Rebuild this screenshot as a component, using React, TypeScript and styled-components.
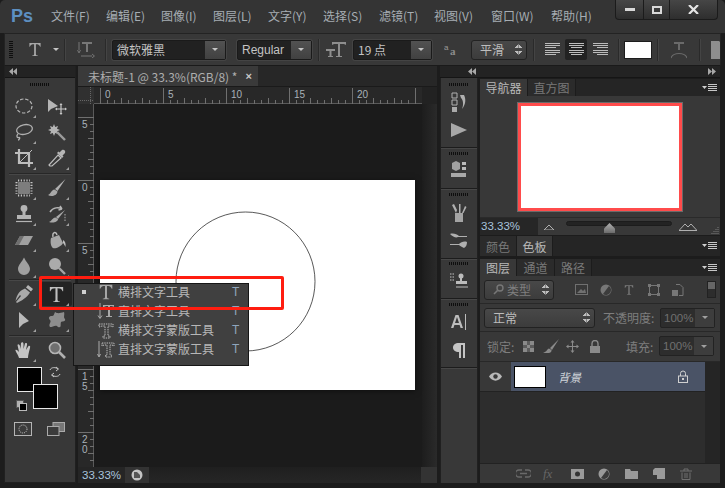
import React, { FC, ReactNode } from "react";
import styled, { createGlobalStyle } from "styled-components";

const CJK = `"Noto Sans CJK SC", "Liberation Sans", sans-serif`;

const GlobalStyle = createGlobalStyle`
  html, body { margin: 0; padding: 0; background: #1c1c1c; }
  * { box-sizing: border-box; }
`;

const Glyph: FC<{ w?: number; h?: number; children: ReactNode }> = ({ w = 20, h = 20, children }) => (
  <svg width={w} height={h} viewBox={`0 0 ${w} ${h}`} fill="none" style={{ display: "block" }}>
    {children}
  </svg>
);

/* ---------- tool icons ---------- */
const IconMarquee = () => (
  <Glyph><ellipse cx="10" cy="10" rx="8" ry="7" stroke="#b5b5b5" strokeWidth="1.2" strokeDasharray="3.4 1.8" /></Glyph>
);
const IconMove = () => (
  <Glyph w={22}>
    <path d="M2 3 L2 16 L5 13 L12 10 Z" fill="#b5b5b5" />
    <path d="M15 8 V18 M10 13 H20" stroke="#c8c8c8" strokeWidth="1.2" />
    <path d="M15 7 L13.5 9 H16.5 Z M15 19 L13.5 17 H16.5 Z M9 13 L11 11.5 V14.5 Z M21 13 L19 11.5 V14.5 Z" fill="#c8c8c8" />
  </Glyph>
);
const IconLasso = () => (
  <Glyph>
    <ellipse cx="10.5" cy="7.5" rx="8" ry="4.8" transform="rotate(-12 10.5 7.5)" stroke="#b0b0b0" strokeWidth="1.3" />
    <path d="M4 12 C2 14 3 16 5 15.5 C6.5 15 5.5 18 4 18" stroke="#b0b0b0" strokeWidth="1.3" />
  </Glyph>
);
const IconWand = () => (
  <Glyph>
    <path d="M7 2 L8.2 5 L11 4 L10 6.8 L13 8 L10 9.2 L11 12 L8.2 11 L7 14 L5.8 11 L3 12 L4 9.2 L1 8 L4 6.8 L3 4 L5.8 5 Z" fill="#b5b5b5" />
    <path d="M10 10 L18 18" stroke="#9c9c9c" strokeWidth="2.4" />
  </Glyph>
);
const IconCrop = () => (
  <Glyph>
    <path d="M5 1 V15 H19 M1 5 H15 V19" stroke="#bdbdbd" strokeWidth="2.2" />
    <path d="M5 15 L18 2" stroke="#bdbdbd" strokeWidth="1" />
  </Glyph>
);
const IconDropper = () => (
  <Glyph>
    <path d="M3 18 L2 17 L11 7 L14 10 L5 18 Z" stroke="#bdbdbd" strokeWidth="1.2" />
    <path d="M10 5 L15 10 L16.5 8.5 L15.5 7.5 L18 5 C19 3 17 1 15 2 L12.5 4.5 L11.5 3.5 Z" fill="#b5b5b5" />
  </Glyph>
);
const IconPatch = () => (
  <Glyph>
    <rect x="4" y="4" width="12" height="12" rx="1" fill="#7d7d7d" />
    <path d="M2.5 4 V16 M17.5 4 V16 M4 2.5 H16 M4 17.5 H16" stroke="#c4c4c4" strokeWidth="2" strokeDasharray="1.2 1.6" />
  </Glyph>
);
const IconBrush = () => (
  <Glyph>
    <path d="M18.5 1 L8 11 L10.5 13 Z" fill="#b0b0b0" />
    <path d="M7.5 11.5 C4 12 4 16 1 17 C4 19 10 18 10.5 13.5 Z" fill="#a8a8a8" />
  </Glyph>
);
const IconStamp = () => (
  <Glyph>
    <circle cx="10" cy="4.5" r="3.4" fill="#b4b4b4" />
    <path d="M8.5 7 H11.5 V11 H17 V15 H3 V11 H8.5 Z" fill="#b4b4b4" />
    <path d="M2 17.5 H18" stroke="#b4b4b4" strokeWidth="1.2" />
  </Glyph>
);
const IconHistoryBrush = () => (
  <Glyph>
    <path d="M18 6 L9 13 L11 15 Z" fill="#aaa" />
    <path d="M8.5 13.5 C5 14 5 17 2 18 C6 19.5 11 18 11 15 Z" fill="#a8a8a8" />
    <path d="M3 8 C6 3 12 3 15 5 M15 5 L13 2 M15 5 L11.5 6" stroke="#b5b5b5" strokeWidth="1.5" />
    <path d="M18 10 V18" stroke="#999" strokeWidth="1.2" strokeDasharray="1.4 1.4" />
  </Glyph>
);
const IconEraser = () => (
  <Glyph>
    <path d="M6 6 H19 L14 15 H1 Z" fill="#a0a0a0" />
    <path d="M1 15 L6 6 H10 L5 15 Z" fill="#6f6f6f" />
  </Glyph>
);
const IconBucket = () => (
  <Glyph>
    <path d="M4 8 L12 5 L16 13 C14 17 8 19 6 18 C4 17 3 12 4 8 Z" fill="#a8a8a8" />
    <path d="M6 7 C5 2 9 1 10 5" stroke="#bbb" strokeWidth="1.4" />
    <path d="M16 10 C18 11 19 13 18.5 17 C17.5 15 17 14 16 13 Z" fill="#bdbdbd" />
  </Glyph>
);
const IconDrop = () => (
  <Glyph><path d="M10 1.5 C12 6 16 9 16 13 A6 6 0 0 1 4 13 C4 9 8 6 10 1.5 Z" fill="#a0a0a0" /></Glyph>
);
const IconDodge = () => (
  <Glyph>
    <circle cx="8" cy="8" r="6" fill="#ababab" />
    <path d="M12 12 L18 18" stroke="#a4a4a4" strokeWidth="2.4" />
  </Glyph>
);
const IconPen = () => (
  <Glyph>
    <path d="M14 1 L19 5 L17 7.5 L12 3.5 Z" fill="#b5b5b5" />
    <path d="M11 4.5 L16 8.5 C14 12 11 15 3 19 L2 18 L7 12 L6 11 L1.5 17 C3 9 7 6 11 4.5 Z" fill="#a9a9a9" />
  </Glyph>
);
const IconPathSelect = () => (
  <Glyph><path d="M5 2 V18 L9 14 L15 11 Z" fill="#b9b9b9" /></Glyph>
);
const IconBlob = () => (
  <Glyph>
    <path d="M8 2 C11 4 13 3 17 2 C18 5 16 7 18 9 C19 12 15 11 14 12 C13 15 15 18 11 17 C9 14 6 17 3 17 C1 14 5 12 3 10 C1 8 2 6 5 6 C7 6 7 4 8 2 Z" fill="#8d8d8d" />
  </Glyph>
);
const IconHand = () => (
  <Glyph>
    <path d="M5 18 C4 14 1 11 1.5 10 C2.5 9 4 11 5 12 L3.5 5 C4 3.5 5.5 4.5 6 6 L6.5 9 L7 3 C8 1.5 9.5 2 9.5 4 V9 L11 3.5 C12 2.5 13.5 3 13 5 L12 10 L14.5 6 C16 5.5 16.5 6.5 16 8 C15 12 14 15 14 18 Z" fill="#c4c4c4" />
  </Glyph>
);
const IconZoom = () => (
  <Glyph>
    <circle cx="8" cy="8" r="5.5" fill="#6f6f6f" stroke="#b5b5b5" strokeWidth="1.6" />
    <path d="M12 12 L18 18" stroke="#b0b0b0" strokeWidth="2.6" />
  </Glyph>
);
const IconType: FC<{ size?: number; color?: string }> = ({ size = 20, color = "#b3b3b3" }) => (
  <svg width={size} height={size} viewBox="0 0 20 20" style={{ display: "block" }}>
    <path d="M3 2 H17 V6.5 H16.4 C15.5 4 14 3.4 11.1 3.4 V15.5 C11.1 17 12 17.2 13.6 17.4 V18 H6.4 V17.4 C8 17.2 8.9 17 8.9 15.5 V3.4 C6 3.4 4.5 4 3.6 6.5 H3 Z" fill={color} />
  </svg>
);
const IconQuickMask = () => (
  <Glyph w={18} h={14}>
    <rect x="0.5" y="0.5" width="17" height="13" fill="#3b3b3b" stroke="#b5b5b5" />
    <circle cx="9" cy="7" r="4" stroke="#cfcfcf" strokeDasharray="1 1" />
  </Glyph>
);
const IconScreenMode = () => (
  <Glyph w={18} h={14}>
    <rect x="6" y="0.5" width="11.5" height="9" fill="#777" stroke="#aaa" />
    <rect x="0.5" y="4.5" width="11.5" height="9" fill="#3b3b3b" stroke="#aaa" />
  </Glyph>
);

/* ---------- menu glyphs ---------- */
const MenuTypeH = () => <IconType size={18} color="#a8a8a8" />;
const MenuTypeV = () => (
  <Glyph w={18} h={18}>
    <path d="M3 1 V16 M1 13.5 L3 16.5 L5 13.5" stroke="#aaa" />
    <path d="M6 3 H17 V5 C16 4 15 4 13 4 V14 H15 V15 H9 V14 H11 V4 C9 4 8 4 7 5 H6 Z" fill="#aaa" />
  </Glyph>
);
const MenuMaskH = () => (
  <Glyph w={18} h={18}>
    <path d="M2 3 H16 V6 L14 5 H11 V15 H13 V17 H6 V15 H8 V5 H5 L2 6 Z" stroke="#bdbdbd" strokeDasharray="1.4 .9" />
  </Glyph>
);
const MenuMaskV = () => (
  <Glyph w={18} h={18}>
    <path d="M2 1 V16 M0.5 14 L2 17 L3.5 14" stroke="#aaa" />
    <path d="M5 3 H17 V6 L15 5 H13 V15 H14.5 V17 H8.5 V15 H10 V5 H7 L5 6 Z" stroke="#bdbdbd" strokeDasharray="1.4 .9" />
  </Glyph>
);

/* ---------- layout ---------- */
const Screen = styled.div`
  width: 725px;
  height: 488px;
  overflow: hidden;
  position: relative;
  background: #1c1c1c;
  display: flex;
  flex-direction: column;
  font-family: ${CJK};
  color: #b4b4b4;
`;

const MenuBar = styled.div`
  height: 33px;
  flex: none;
  display: flex;
  align-items: flex-start;
  padding: 7px 7px 0 11px;
  background: #343434;
  border-top-left-radius: 5px;
  border-top-right-radius: 5px;
`;
const Logo = styled.div`
  width: 40px;
  margin-top: -2px;
  font: bold 18px/22px "Liberation Sans", sans-serif;
  color: #5d8fc1;
`;
const MenuItem = styled.div<{ $w: number }>`
  width: ${(p) => p.$w}px;
  font-size: 12px;
  line-height: 18px;
  color: #a6adb3;
  white-space: nowrap;
`;
const WindowButtons = styled.div`
  margin: -7px 0 0 auto;
  height: 20px;
  display: flex;
  background: linear-gradient(#464646, #2e2e2e);
  border: 1px solid #1b1b1b;
  border-top: 0;
  border-radius: 0 0 4px 4px;
`;
const WinButton = styled.div<{ $w: number; $last?: boolean }>`
  width: ${(p) => p.$w}px;
  display: flex;
  align-items: center;
  justify-content: center;
  border-right: ${(p) => (p.$last ? "0" : "1px solid #1b1b1b")};
`;

const Workspace = styled.div`
  flex: 1;
  display: flex;
  flex-direction: column;
  padding: 0 4px 5px;
  min-height: 0;
`;

const OptionsBar = styled.div`
  height: 33px;
  flex: none;
  display: flex;
  align-items: center;
  position: relative;
  background: #383838;
  border: 1px solid #232323;
  border-bottom: 1px solid #1a1a1a;
  overflow: hidden;
`;
const Grip = styled.div<{ $vertical?: boolean }>`
  flex: none;
  width: ${(p) => (p.$vertical ? "4px" : "20px")};
  height: ${(p) => (p.$vertical ? "18px" : "3px")};
  background: ${(p) =>
    p.$vertical
      ? "repeating-linear-gradient(180deg, #0e0e0e 0 1px, transparent 1px 2px)"
      : "repeating-linear-gradient(90deg, #0e0e0e 0 1px, transparent 1px 2px)"};
`;
const Slot = styled.div<{ $w: number; $ml?: number }>`
  flex: none;
  width: ${(p) => p.$w}px;
  margin-left: ${(p) => p.$ml ?? 0}px;
  display: flex;
  align-items: center;
  justify-content: center;
`;
const Sep = styled.div<{ $ml: number }>`
  flex: none;
  width: 1px;
  height: 22px;
  margin-left: ${(p) => p.$ml}px;
  background: #2a2a2a;
  box-shadow: 1px 0 0 #444;
`;
const DarkSelect = styled.div<{ $w: number; $ml: number }>`
  flex: none;
  width: ${(p) => p.$w}px;
  height: 20px;
  margin-left: ${(p) => p.$ml}px;
  display: flex;
  align-items: stretch;
  background: #212121;
  border: 1px solid #1a1a1a;
  border-radius: 2px;
  box-shadow: 0 0 0 1px #444;
`;
const SelectText = styled.div<{ $latin?: boolean }>`
  flex: 1;
  padding-left: 4px;
  font-family: ${(p) => (p.$latin ? `"Liberation Sans", sans-serif` : CJK)};
  font-size: 12px;
  line-height: 18px;
  color: #c4c4c4;
  white-space: nowrap;
  overflow: hidden;
`;
const CaretBox = styled.div`
  flex: none;
  width: 20px;
  display: flex;
  align-items: center;
  justify-content: center;
  background: linear-gradient(#525252, #414141);
`;
const Caret = styled.span<{ $color?: string }>`
  display: block;
  width: 0;
  height: 0;
  border-left: 3px solid transparent;
  border-right: 3px solid transparent;
  border-top: 3px solid ${(p) => p.$color ?? "#c4c4c4"};
`;
const Updown = styled.span`
  display: block;
  width: 7px;
  height: 11px;
  margin-left: auto;
  background:
    linear-gradient(135deg, transparent 50%, #bdbdbd 50%) 0 0 / 3.5px 4px no-repeat,
    linear-gradient(225deg, transparent 50%, #bdbdbd 50%) 3.5px 0 / 3.5px 4px no-repeat,
    linear-gradient(45deg, transparent 50%, #bdbdbd 50%) 0 7px / 3.5px 4px no-repeat,
    linear-gradient(315deg, transparent 50%, #bdbdbd 50%) 3.5px 7px / 3.5px 4px no-repeat;
`;
const LightSelect = styled.div<{ $w: number; $ml: number; $muted?: boolean }>`
  flex: none;
  width: ${(p) => p.$w}px;
  height: 20px;
  margin-left: ${(p) => p.$ml}px;
  display: flex;
  align-items: center;
  padding: 0 4px 0 8px;
  font-size: 12px;
  color: ${(p) => (p.$muted ? "#7f7f7f" : "#bdbdbd")};
  background: linear-gradient(#484848, #3c3c3c);
  border: 1px solid #222;
  border-radius: 3px;
`;
const AlignButton = styled.div<{ $active?: boolean; $ml: number }>`
  flex: none;
  width: 22px;
  height: 21px;
  margin-left: ${(p) => p.$ml}px;
  display: flex;
  align-items: center;
  justify-content: center;
  border-radius: 2px;
  background: ${(p) => (p.$active ? "#222" : "transparent")};
`;
const ColorChip = styled.div`
  flex: none;
  width: 26px;
  height: 16px;
  margin-left: 6px;
  background: #fff;
  box-shadow: 0 0 0 1px #1c1c1c;
`;

const Body = styled.div`
  flex: 1;
  min-height: 0;
  display: flex;
  gap: 2px;
  margin-right: 1px;
`;

/* ---------- tools ---------- */
const ToolBar = styled.div`
  width: 72px;
  flex: none;
  display: flex;
  flex-direction: column;
  position: relative;
  background: #383838;
  border: 1px solid #202020;
  border-top: 0;
`;
const CollapseBar = styled.div<{ $between?: boolean }>`
  height: 12px;
  flex: none;
  display: flex;
  align-items: center;
  justify-content: ${(p) => (p.$between ? "flex-end" : "flex-start")};
  padding: 0 4px;
  background: #232323;
  color: #aaa;
  border-bottom: 1px solid #151515;
`;
const GripRow = styled.div<{ $h: number; $mb?: number }>`
  height: ${(p) => p.$h}px;
  margin-bottom: ${(p) => p.$mb ?? 0}px;
  flex: none;
  display: flex;
  align-items: center;
  justify-content: center;
`;
const ToolGroup = styled.div<{ $pb: number; $rule?: boolean }>`
  position: relative;
  display: grid;
  grid-template-columns: 33px 33px;
  grid-auto-rows: 26px;
  padding: 0 0 ${(p) => p.$pb}px 2px;
  &::after {
    content: "";
    display: ${(p) => (p.$rule ? "block" : "none")};
    position: absolute;
    left: 4px;
    right: 4px;
    bottom: -2px;
    height: 2px;
    background: linear-gradient(#272727 50%, #474747 50%);
  }
  margin-bottom: ${(p) => (p.$rule ? 2 : 0)}px;
`;
const Tool = styled.div<{ $more?: boolean; $active?: boolean }>`
  position: relative;
  display: flex;
  align-items: center;
  justify-content: center;
  margin: 1px 1px;
  border-radius: 2px;
  background: ${(p) => (p.$active ? "#232323" : "transparent")};
  &::after {
    content: "";
    display: ${(p) => (p.$more ? "block" : "none")};
    position: absolute;
    right: 3px;
    bottom: 0;
    border-left: 3px solid transparent;
    border-bottom: 3px solid #a0a0a0;
  }
`;
const SwatchArea = styled.div`
  position: relative;
  height: 59px;
  flex: none;
`;
const Swatch = styled.div<{ $x: number; $y: number }>`
  position: absolute;
  left: ${(p) => p.$x}px;
  top: ${(p) => p.$y}px;
  width: 25px;
  height: 25px;
  background: #000;
  border: 1px solid #e8e8e8;
`;
const SwatchIcon = styled.div<{ $x: number; $y: number }>`
  position: absolute;
  left: ${(p) => p.$x}px;
  top: ${(p) => p.$y}px;
`;
const ModeRow = styled.div`
  display: flex;
  padding-left: 9px;
  gap: 15px;
`;

/* ---------- document ---------- */
const DocArea = styled.div`
  width: 359px;
  flex: none;
  display: flex;
  flex-direction: column;
  background: #1b1b1b;
`;
const TabStrip = styled.div`
  height: 21px;
  flex: none;
  display: flex;
  background: #272727;
  border-bottom: 1px solid #1a1a1a;
`;
const DocTab = styled.div`
  width: 180px;
  display: flex;
  align-items: center;
  padding-left: 10px;
  background: #3a3a3a;
  font-size: 12px;
  color: #aeaeae;
  white-space: nowrap;
`;
const CloseMark = styled.span`
  margin-left: auto;
  margin-right: 6px;
  font: bold 11px "Liberation Sans", sans-serif;
  color: #c8c8c8;
`;
const RulerRow = styled.div`
  height: 17px;
  flex: none;
  display: flex;
  background: #282828;
`;
const RulerCorner = styled.div`
  width: 16px;
  flex: none;
  background: #303030;
`;
const RulerEnd = styled.div`
  flex: 1;
  background: #222;
`;
const CanvasRow = styled.div`
  flex: 1;
  min-height: 0;
  display: flex;
`;
const VRuler = styled.div`
  width: 16px;
  flex: none;
  background: #282828;
  overflow: hidden;
`;
const Pasteboard = styled.div`
  flex: 1;
  position: relative;
  background: #1b1b1b;
`;
const Artboard = styled.div`
  position: absolute;
  left: 6px;
  top: 76px;
  width: 315px;
  height: 210px;
  background: #fff;
  box-shadow: 0 1px 6px rgba(0, 0, 0, 0.5);
`;
const ScrollEdge = styled.div`
  position: absolute;
  right: 0;
  top: 0;
  bottom: 0;
  width: 15px;
  background: linear-gradient(90deg, #1d1d1d, #2a2a2a);
`;
const StatusBar = styled.div`
  height: 16px;
  flex: none;
  display: flex;
  background: linear-gradient(#1f1f1f, #262626);
`;
const ZoomValue = styled.div`
  width: 47px;
  padding-left: 4px;
  font: 11.5px/16px "Liberation Sans", sans-serif;
  color: #a9c4dd;
  background: #252525;
`;
const StatusButton = styled.div<{ $w: number; $end?: boolean }>`
  width: ${(p) => p.$w}px;
  margin-left: ${(p) => (p.$end ? "auto" : "0")};
  display: flex;
  align-items: center;
  justify-content: center;
  background: #333;
`;

/* ---------- right side ---------- */
const RightDock = styled.div`
  margin-left: 1px;
  flex: 1;
  display: flex;
  flex-direction: column;
`;
const DockColumns = styled.div`
  flex: 1;
  min-height: 0;
  display: flex;
  gap: 2px;
`;
const IconDock = styled.div`
  width: 38px;
  flex: none;
  display: flex;
  flex-direction: column;
  background: #383838;
  border-left: 1px solid #202020;
  border-right: 1px solid #202020;
`;
const DockGroup = styled.div<{ $h: number }>`
  height: ${(p) => p.$h}px;
  flex: none;
  display: flex;
  flex-direction: column;
  align-items: center;
  align-self: stretch;
  border-bottom: 1px solid #1c1c1c;
  box-shadow: 0 1px 0 #474747;
  margin-bottom: 1px;
`;
const DockIcon = styled.div<{ $h: number }>`
  height: ${(p) => p.$h}px;
  flex: none;
  display: flex;
  align-items: center;
  justify-content: center;
`;
const PanelColumn = styled.div`
  flex: 1;
  min-width: 0;
  padding-top: 1px;
  display: flex;
  flex-direction: column;
  gap: 1px;
`;
const TabsBar = styled.div<{ $mt?: number }>`
  height: 17px;
  flex: none;
  margin-top: ${(p) => p.$mt ?? 0}px;
  display: flex;
  background: #252525;
`;
const TallTabsBar = styled(TabsBar)`
  height: 20px;
`;
const PanelTab = styled.div<{ $w: number; $active?: boolean }>`
  width: ${(p) => p.$w}px;
  display: flex;
  align-items: center;
  justify-content: center;
  font-size: 12px;
  color: ${(p) => (p.$active ? "#b9b9b9" : "#797979")};
  background: ${(p) => (p.$active ? "#383838" : "#2b2b2b")};
  border-right: 1px solid #1c1c1c;
`;
const PanelMenu = styled.div`
  margin: auto 2px auto auto;
`;
const NavBody = styled.div`
  height: 121px;
  flex: none;
  margin-top: -1px;
  padding-top: 7px;
  display: flex;
  justify-content: center;
  background: #383838;
`;
const NavPreview = styled.div`
  width: 164px;
  height: 108px;
  background: #fff;
  border: 3px solid #ff4b4b;
  box-shadow: 0 0 0 1px #6a6a6a;
`;
const NavFooter = styled.div`
  height: 18px;
  flex: none;
  margin-top: -1px;
  display: flex;
  align-items: center;
  background: #383838;
  border-top: 1px solid #2a2a2a;
`;
const NavZoom = styled.div`
  width: 58px;
  align-self: stretch;
  padding-left: 1px;
  font: 11.5px/17px "Liberation Sans", sans-serif;
  color: #a9c4dd;
  background: #262626;
`;
const SliderTrack = styled.div`
  position: relative;
  width: 106px;
  height: 5px;
  margin: 0 7px 6px 12px;
  background: #232323;
  border-radius: 3px;
  border: 1px solid #1c1c1c;
`;
const SliderThumb = styled.div`
  position: absolute;
  left: 37px;
  top: 1px;
  width: 11px;
  height: 10px;
  background: linear-gradient(#b0b0b0, #6b6b6b);
  clip-path: polygon(50% 0, 100% 55%, 100% 100%, 0 100%, 0 55%);
`;
const PanelRow = styled.div<{ $h: number; $pb?: number }>`
  height: ${(p) => p.$h}px;
  flex: none;
  margin-top: -1px;
  padding-bottom: ${(p) => p.$pb ?? 0}px;
  display: flex;
  align-items: center;
  background: #383838;
  border-bottom: 1px solid #282828;
  box-shadow: 0 1px 0 #434343;
`;
const RowLabel = styled.div<{ $ml: number; $w: number }>`
  margin-left: ${(p) => p.$ml}px;
  width: ${(p) => p.$w}px;
  font-size: 12px;
  color: #7e7e7e;
  white-space: nowrap;
`;
const NumberField = styled.div`
  width: 55px;
  height: 20px;
  margin-left: 5px;
  display: flex;
  background: #2d2d2d;
  border: 1px solid #222;
  border-radius: 2px;
  font: 11.5px/18px "Liberation Sans", sans-serif;
  color: #707070;
`;
const NumberText = styled.div`
  flex: 1;
  padding-left: 3px;
`;
const NumberCaret = styled.div`
  width: 19px;
  display: flex;
  align-items: center;
  justify-content: center;
  background: #3d3d3d;
`;
const RowIcon = styled.div<{ $ml: number }>`
  margin-left: ${(p) => p.$ml}px;
  display: flex;
`;
const FilterToggle = styled.div`
  width: 9px;
  height: 17px;
  margin-left: 23px;
  background: linear-gradient(#666 0 50%, #2d2d2d 50% 100%);
  border: 1px solid #222;
`;
const LayerList = styled.div`
  flex: 1;
  min-height: 0;
  margin-top: -1px;
  display: flex;
  background: #2d2d2d;
`;
const LayerMain = styled.div`
  flex: 1;
  display: flex;
  align-items: flex-start;
`;
const EyeCell = styled.div`
  width: 31px;
  height: 30px;
  flex: none;
  display: flex;
  align-items: center;
  justify-content: center;
  background: #383838;
  border-bottom: 1px solid #222;
`;
const LayerRow = styled.div`
  flex: 1;
  height: 30px;
  display: flex;
  align-items: center;
  padding-left: 3px;
  background: #4a5366;
  border-bottom: 1px solid #222;
`;
const LayerThumb = styled.div`
  width: 32px;
  height: 22px;
  background: #fff;
  border: 1px solid #000;
`;
const LayerName = styled.div`
  margin-left: 12px;
  font-size: 11.5px;
  font-style: italic;
  color: #cfd3da;
`;
const LayerLock = styled.div`
  margin: 0 17px 0 auto;
`;
const ListScroll = styled.div`
  width: 15px;
  flex: none;
  background: #252525;
`;
const LayerFooter = styled.div`
  height: 20px;
  flex: none;
  margin-top: -1px;
  display: flex;
  align-items: center;
  padding-left: 30px;
  background: #383838;
  border-top: 1px solid #222;
`;
const FooterSlot = styled.div`
  width: 27px;
  flex: none;
  display: flex;
  justify-content: center;
`;
const RedHighlight = styled.div`
  position: absolute;
  left: 39px;
  top: 276px;
  width: 245px;
  height: 34px;
  border: 3px solid #ff1d10;
  border-radius: 2px;
  z-index: 5;
  pointer-events: none;
`;
const Flyout = styled.div`
  position: absolute;
  left: 73px;
  top: 283px;
  width: 176px;
  height: 83px;
  z-index: 4;
  background: #404040;
  border: 1px solid #161616;
  & > :first-child {
    margin-top: -2px;
  }
`;
const FlyItem = styled.div`
  height: 19px;
  display: flex;
  align-items: center;
  font-size: 12px;
  color: #b7b7b7;
`;
const Bullet = styled.span<{ $on?: boolean }>`
  width: 4px;
  height: 4px;
  margin: 0 11px 0 8px;
  flex: none;
  background: ${(p) => (p.$on ? "#d0d0d0" : "transparent")};
`;
const FlyLabel = styled.span`
  margin-left: 3px;
  width: 114px;
`;
const Shortcut = styled.span`
  font: 12px "Liberation Sans", sans-serif;
  color: #8fa6bd;
`;

/* ---------- small drawings ---------- */
const Arrows: FC<{ dir: "left" | "right" }> = ({ dir }) => (
  <svg width="8" height="7" viewBox="0 0 8 7" style={{ display: "block" }}>
    {dir === "left" ? <path d="M4 0 L0 3.5 L4 7 Z M8 0 L4 3.5 L8 7 Z" fill="#a8a8a8" /> : <path d="M0 0 L4 3.5 L0 7 Z M4 0 L8 3.5 L4 7 Z" fill="#a8a8a8" />}
  </svg>
);
const MenuLines = () => (
  <svg width="16" height="8" viewBox="0 0 16 8" style={{ display: "block" }}>
    <path d="M0 2 H5 L2.5 5 Z" fill="#cfcfcf" />
    <path d="M6 .5 H15 M6 2.5 H15 M6 4.5 H15 M6 6.5 H15" stroke="#c8c8c8" />
  </svg>
);
const AlignLines: FC<{ mode: "left" | "center" | "right" }> = ({ mode }) => {
  const widths = [15, 15, 11, 15, 15, 11];
  return (
    <svg width="15" height="13" viewBox="0 0 15 13" style={{ display: "block" }}>
      {widths.map((w, i) => {
        const x = mode === "left" ? 0 : mode === "center" ? (15 - w) / 2 : 15 - w;
        return <rect key={i} x={x} y={i * 2 + (i > 2 ? 1 : 0)} width={w} height="1" fill="#bcbcbc" />;
      })}
    </svg>
  );
};
const CornerMarks = () => (
  <svg width="16" height="17" style={{ display: "block" }}>
    <path d="M0 13.5 H16 M12.5 0 V17" stroke="#666" strokeDasharray="1 1" />
  </svg>
);
const TopRuler = () => {
  const ticks = Array.from({ length: 47 }, (_, i) => i);
  return (
    <svg width="328" height="17" style={{ display: "block" }}>
      <line x1="0" x2="328" y1="16.5" y2="16.5" stroke="#5a5a5a" />
      {ticks.map((i) => {
        const x = 6.5 + i * 7;
        const y1 = i % 9 === 0 ? 1 : i % 3 === 0 ? 11 : 13;
        return <line key={i} x1={x} x2={x} y1={y1} y2={17} stroke="#6f6f6f" />;
      })}
      {[0, 5, 10, 15, 20].map((n, i) => (
        <text key={n} x={11 + i * 63} y={11} fontSize="10" fontFamily="Liberation Sans" fill="#a9b2ba">
          {n}
        </text>
      ))}
    </svg>
  );
};
const SideRuler = () => {
  const ticks = Array.from({ length: 53 }, (_, i) => i);
  const labels: [string, number][] = [["5", 24], ["0", 87], ["5", 150], ["1", 276], ["5", 286], ["2", 339], ["0", 349]];
  return (
    <svg width="16" height="363" style={{ display: "block" }}>
      <line x1="15.5" x2="15.5" y1="0" y2="363" stroke="#5a5a5a" />
      {ticks.map((i) => {
        const y = 13.5 + i * 7;
        const x1 = i % 9 === 0 ? 0 : i % 3 === 0 ? 10 : 12;
        return <line key={i} x1={x1} x2={16} y1={y} y2={y} stroke="#6f6f6f" />;
      })}
      {labels.map(([t, y], i) => (
        <text key={i} x={4} y={y} fontSize="10" fontFamily="Liberation Sans" fill="#a9b2ba">
          {t}
        </text>
      ))}
    </svg>
  );
};

const tools: { pb: number; rule: boolean; items: { icon: ReactNode; more?: boolean; active?: boolean }[] }[] = [
  {
    pb: 2,
    rule: true,
    items: [
      { icon: <IconMarquee />, more: true },
      { icon: <IconMove /> },
      { icon: <IconLasso />, more: true },
      { icon: <IconWand /> },
      { icon: <IconCrop />, more: true },
      { icon: <IconDropper />, more: true },
    ],
  },
  {
    pb: 0,
    rule: true,
    items: [
      { icon: <IconPatch />, more: true },
      { icon: <IconBrush />, more: true },
      { icon: <IconStamp />, more: true },
      { icon: <IconHistoryBrush />, more: true },
      { icon: <IconEraser />, more: true },
      { icon: <IconBucket />, more: true },
      { icon: <IconDrop />, more: true },
      { icon: <IconDodge />, more: true },
    ],
  },
  {
    pb: 2,
    rule: true,
    items: [
      { icon: <IconPen />, more: true },
      { icon: <IconType size={19} color="#c0c0c0" />, more: true, active: true },
      { icon: <IconPathSelect />, more: true },
      { icon: <IconBlob />, more: true },
    ],
  },
  {
    pb: 0,
    rule: false,
    items: [{ icon: <IconHand />, more: true }, { icon: <IconZoom /> }],
  },
];

const flyItems = [
  { icon: <MenuTypeH />, label: "横排文字工具", on: true },
  { icon: <MenuTypeV />, label: "直排文字工具" },
  { icon: <MenuMaskH />, label: "横排文字蒙版工具" },
  { icon: <MenuMaskV />, label: "直排文字蒙版工具" },
];

const App: FC = () => (
  <Screen>
    <GlobalStyle />
    <MenuBar>
      <Logo>Ps</Logo>
      {[
        ["文件(F)", 55],
        ["编辑(E)", 55],
        ["图像(I)", 52],
        ["图层(L)", 55],
        ["文字(Y)", 55],
        ["选择(S)", 56],
        ["滤镜(T)", 55],
        ["视图(V)", 57],
        ["窗口(W)", 60],
        ["帮助(H)", 50],
      ].map(([t, w]) => (
        <MenuItem key={t as string} $w={w as number}>
          {t}
        </MenuItem>
      ))}
      <WindowButtons>
        <WinButton $w={28}>
          <svg width="10" height="3"><rect width="10" height="3" fill="#d8d8d8" /></svg>
        </WinButton>
        <WinButton $w={26}>
          <svg width="10" height="8"><rect x="1" y="1" width="8" height="6" fill="none" stroke="#d8d8d8" strokeWidth="2" /></svg>
        </WinButton>
        <WinButton $w={47} $last>
          <svg width="11" height="9"><path d="M1 0 L10 9 M10 0 L1 9" stroke="#e4e4e4" strokeWidth="2.2" /></svg>
        </WinButton>
      </WindowButtons>
    </MenuBar>
    <Workspace>
      <OptionsBar>
        <Slot $w={4} $ml={4}><Grip $vertical /></Slot>
        <Slot $w={16} $ml={14}><IconType size={17} color="#a8a8a8" /></Slot>
        <Slot $w={6} $ml={10}><Caret /></Slot>
        <Sep $ml={5} />
        <Slot $w={18} $ml={12}>
          <svg width="18" height="17" viewBox="0 0 18 17" style={{ display: "block" }}>
            <path d="M2 1 V11 M0.5 9 L2 12 L3.5 9" stroke="#777" />
            <path d="M5 1 H15 V3 H11 V11 H9 V3 H5 Z" fill="#777" />
            <path d="M4 15 H17 M15 13 L17.5 15 L15 17" stroke="#777" />
          </svg>
        </Slot>
        <Sep $ml={10} />
        <DarkSelect $w={114} $ml={6}>
          <SelectText>微软雅黑</SelectText>
          <CaretBox><Caret /></CaretBox>
        </DarkSelect>
        <DarkSelect $w={75} $ml={11}>
          <SelectText $latin>Regular</SelectText>
          <CaretBox><Caret /></CaretBox>
        </DarkSelect>
        <Sep $ml={6} />
        <Slot $w={20} $ml={7}>
          <svg width="20" height="16" viewBox="0 0 20 16" style={{ display: "block" }}>
            <path d="M6 0 H20 V3 L18 2 H14 V14 H16 V15 H10 V14 H12 V2 H8 L6 3 Z" fill="#8e8e8e" />
            <path d="M0 7 H9 V9 H5.5 V14 H7 V15 H2 V14 H3.5 V9 H0 Z" fill="#8e8e8e" />
          </svg>
        </Slot>
        <DarkSelect $w={79} $ml={7}>
          <SelectText>19 点</SelectText>
          <CaretBox><Caret /></CaretBox>
        </DarkSelect>
        <Slot $w={14} $ml={12}>
          <svg width="14" height="12" viewBox="0 0 14 12" style={{ display: "block" }}>
            <text x="0" y="6" fontSize="8" fontFamily="Liberation Sans" fill="#9a9a9a">a</text>
            <text x="6" y="11" fontSize="11" fontWeight="bold" fontFamily="Liberation Serif" fill="#8c8c8c">a</text>
          </svg>
        </Slot>
        <LightSelect $w={56} $ml={13}>平滑<Updown /></LightSelect>
        <Sep $ml={6} />
        <AlignButton $ml={7}><AlignLines mode="left" /></AlignButton>
        <AlignButton $ml={2} $active><AlignLines mode="center" /></AlignButton>
        <AlignButton $ml={2}><AlignLines mode="right" /></AlignButton>
        <Sep $ml={7} />
        <ColorChip />
        <Sep $ml={6} />
        <Slot $w={18} $ml={12}>
          <svg width="16" height="18" viewBox="0 0 16 18" style={{ display: "block" }}>
            <path d="M3 1 H13 V3 H9 V9 H7 V3 H3 Z" fill="#6a6a6a" />
            <path d="M0 17 C2 11 14 11 16 17" stroke="#6a6a6a" strokeWidth="1.2" fill="none" />
          </svg>
        </Slot>
        <Sep $ml={11} />
        <Slot $w={12} $ml={11}>
          <svg width="12" height="18" viewBox="0 0 12 18" style={{ display: "block" }}>
            <path d="M0 0 H8 L12 4 V18 H0 Z" fill="#8e8e8e" />
          </svg>
        </Slot>
      </OptionsBar>
      <Body>
        <ToolBar>
          <CollapseBar><Arrows dir="left" /></CollapseBar>
          <GripRow $h={12} $mb={3}><Grip /></GripRow>
          {tools.map((g, gi) => (
            <ToolGroup key={gi} $pb={g.pb} $rule={g.rule}>
              {g.items.map((t, i) => (
                <Tool key={i} $more={t.more} $active={t.active}>
                  {t.icon}
                </Tool>
              ))}
            </ToolGroup>
          ))}
          <SwatchArea>
            <Swatch $x={12} $y={4} />
            <Swatch $x={28} $y={21} />
            <SwatchIcon $x={44} $y={3}>
              <svg width="12" height="12" viewBox="0 0 12 12" style={{ display: "block" }}>
                <path d="M1 4 C2 1 7 1 9 3 M7 1 L9.5 3 L7 5 M11 8 C10 11 5 11 3 9 M5 11 L2.5 9 L5 7" stroke="#c9c9c9" fill="none" />
              </svg>
            </SwatchIcon>
            <SwatchIcon $x={11} $y={37}>
              <svg width="11" height="11" style={{ display: "block" }}>
                <rect x="0.5" y="0.5" width="7" height="7" fill="#b0b0b0" stroke="#555" />
                <rect x="3.5" y="3.5" width="7" height="7" fill="#000" stroke="#bbb" />
              </svg>
            </SwatchIcon>
          </SwatchArea>
          <ModeRow>
            <IconQuickMask />
            <IconScreenMode />
          </ModeRow>
        </ToolBar>
        <DocArea>
          <TabStrip>
            <DocTab>
              未标题-1 @ 33.3%(RGB/8) *<CloseMark>×</CloseMark>
            </DocTab>
          </TabStrip>
          <RulerRow>
            <RulerCorner><CornerMarks /></RulerCorner>
            <TopRuler />
            <RulerEnd />
          </RulerRow>
          <CanvasRow>
            <VRuler><SideRuler /></VRuler>
            <Pasteboard>
              <ScrollEdge />
              <Artboard>
                <svg width="315" height="210" style={{ display: "block" }}>
                  <circle cx="145.5" cy="101.5" r="69.5" fill="none" stroke="#111" strokeWidth="0.7" />
                </svg>
              </Artboard>
            </Pasteboard>
          </CanvasRow>
          <StatusBar>
            <ZoomValue>33.33%</ZoomValue>
            <StatusButton $w={24}>
              <svg width="12" height="12" viewBox="0 0 12 12" style={{ display: "block" }}>
                <circle cx="6" cy="6" r="5.5" fill="#c4c4c4" />
                <path d="M6 3 H3 V9 H9 V6 Z" fill="#555" />
              </svg>
            </StatusButton>
            <StatusButton $w={16} $end />
          </StatusBar>
        </DocArea>
        <RightDock>
          <CollapseBar $between>
            <Slot $w={8} $ml={24} style={{ marginRight: "auto" }}><Arrows dir="left" /></Slot>
            <Arrows dir="right" />
          </CollapseBar>
          <DockColumns>
            <IconDock>
              <DockGroup $h={70}>
                <GripRow $h={12}><Grip /></GripRow>
                <DockIcon $h={24}>
                  <svg width="16" height="20" viewBox="0 0 16 20" style={{ display: "block" }}>
                    <path d="M1 1 H6 V6 H1 Z M1 8 H6 V13 H1 Z" fill="none" stroke="#b0b0b0" />
                    <rect x="1" y="15" width="5" height="5" fill="#aaa" />
                    <path d="M9 3 H13 C15 7 15 12 11 17 C13 12 12 8 10 6 Z" fill="#b0b0b0" />
                  </svg>
                </DockIcon>
                <DockIcon $h={32}>
                  <svg width="16" height="14" style={{ display: "block" }}><path d="M0 0 L16 7 L0 14 Z" fill="#a8a8a8" /></svg>
                </DockIcon>
              </DockGroup>
              <DockGroup $h={40}>
                <GripRow $h={8}><Grip /></GripRow>
                <DockIcon $h={26}>
                  <svg width="16" height="18" viewBox="0 0 16 18" style={{ display: "block" }}>
                    <path d="M1 2 L5 0 L9 2 V8 L5 10 L1 8 Z" fill="#a0a0a0" />
                    <rect x="11" y="1" width="4" height="3" fill="#bbb" />
                    <rect x="11" y="6" width="4" height="3" fill="#bbb" />
                    <rect x="0" y="12" width="15" height="4" fill="#a8a8a8" />
                  </svg>
                </DockIcon>
              </DockGroup>
              <DockGroup $h={69}>
                <GripRow $h={8}><Grip /></GripRow>
                <DockIcon $h={28}>
                  <svg width="16" height="19" viewBox="0 0 16 19" style={{ display: "block" }}>
                    <rect x="4" y="10" width="8" height="9" fill="#a4a4a4" />
                    <path d="M5 10 L1 2 L3 1 L6 7 M8 10 V1 H9.5 V10 M11 10 L14 3 L15.5 4 L12.5 10" fill="#b0b0b0" />
                  </svg>
                </DockIcon>
                <DockIcon $h={28}>
                  <svg width="18" height="15" viewBox="0 0 18 15" style={{ display: "block" }}>
                    <path d="M0 1 C3 0 7 1 9 3 H17 V4 H8 C6 5 3 4 0 1 Z M0 11 H9 C11 9 14 8 17 9 C17 12 16 14 14 15 C12 14 10 13 9 12 H0 Z" fill="#b0b0b0" />
                  </svg>
                </DockIcon>
              </DockGroup>
              <DockGroup $h={39}>
                <GripRow $h={7}><Grip /></GripRow>
                <DockIcon $h={28}>
                  <svg width="18" height="16" viewBox="0 0 18 16" style={{ display: "block" }}>
                    <path d="M0 1 H5 M0 4 H5 M0 7 H5" stroke="#c4c4c4" strokeDasharray="1.5 1" />
                    <circle cx="11" cy="3" r="2.5" fill="#bbb" />
                    <path d="M10 5 H12 V8 H17 V11 H6 V8 H10 Z" fill="#bbb" />
                    <path d="M6 14 H18" stroke="#bbb" />
                  </svg>
                </DockIcon>
              </DockGroup>
              <DockGroup $h={68}>
                <GripRow $h={8}><Grip /></GripRow>
                <DockIcon $h={28}>
                  <svg width="16" height="16" viewBox="0 0 16 16" style={{ display: "block" }}>
                    <path d="M4.5 1 H7.5 L12 14 H9.6 L8.6 11 H3.4 L2.4 14 H0 Z M4 9 H8 L6 3 Z" fill="#bcbcbc" />
                    <rect x="14" y="0" width="1" height="16" fill="#bcbcbc" />
                  </svg>
                </DockIcon>
                <DockIcon $h={28}>
                  <svg width="12" height="15" viewBox="0 0 12 15" style={{ display: "block" }}>
                    <path d="M6 0 H12 V15 H10 V2 H8 V15 H6 V9 C2 9 0 7 0 4.5 C0 2 2 0 6 0 Z" fill="#c4c4c4" />
                  </svg>
                </DockIcon>
              </DockGroup>
            </IconDock>
            <PanelColumn>
              <TabsBar>
                <PanelTab $w={48} $active>导航器</PanelTab>
                <PanelTab $w={48}>直方图</PanelTab>
                <PanelMenu><MenuLines /></PanelMenu>
              </TabsBar>
              <NavBody>
                <NavPreview />
              </NavBody>
              <NavFooter>
                <NavZoom>33.33%</NavZoom>
                <svg width="10" height="6" style={{ display: "block", marginLeft: "6px" }}>
                  <path d="M0 6 L5 1 L10 6 Z" fill="none" stroke="#b0b0b0" />
                </svg>
                <SliderTrack><SliderThumb /></SliderTrack>
                <svg width="18" height="8" style={{ display: "block" }}>
                  <path d="M0 7.5 L6 1 L9 4 L12 1 L18 7.5 Z" fill="none" stroke="#b0b0b0" />
                </svg>
                <svg width="8" height="9" style={{ display: "block", marginLeft: "14px", marginTop: "7px" }}>
                  <path d="M7 1 V2 M5 3 V4 M7 3 V4 M3 5 V6 M5 5 V6 M7 5 V6 M1 7 V8 M3 7 V8 M5 7 V8 M7 7 V8" stroke="#7a7a7a" />
                </svg>
              </NavFooter>
              <TallTabsBar>
                <PanelTab $w={37}>颜色</PanelTab>
                <PanelTab $w={36} $active>色板</PanelTab>
                <PanelMenu><MenuLines /></PanelMenu>
              </TallTabsBar>
              <TabsBar $mt={2}>
                <PanelTab $w={37} $active>图层</PanelTab>
                <PanelTab $w={38}>通道</PanelTab>
                <PanelTab $w={37}>路径</PanelTab>
                <PanelMenu><MenuLines /></PanelMenu>
              </TabsBar>
              <PanelRow $h={28}>
                <LightSelect $w={70} $ml={4} $muted>
                  <svg width="11" height="11" style={{ display: "block", marginRight: "3px" }}>
                    <circle cx="7" cy="4" r="3" fill="none" stroke="#777" strokeWidth="1.4" />
                    <path d="M4.5 6.5 L1 10" stroke="#777" strokeWidth="1.6" />
                  </svg>
                  类型<Updown />
                </LightSelect>
                <RowIcon $ml={21}>
                  <svg width="13" height="11" style={{ display: "block" }}>
                    <rect x="0.5" y="0.5" width="12" height="10" fill="none" stroke="#707070" />
                    <path d="M2 9 L6 5 L8 7 L10 5 L11 9 Z" fill="#707070" />
                  </svg>
                </RowIcon>
                <RowIcon $ml={12}>
                  <svg width="12" height="12" style={{ display: "block" }}>
                    <circle cx="6" cy="6" r="5.5" fill="#777" />
                    <path d="M9 2 A5 5 0 0 1 3 10 Z" fill="#3c3c3c" />
                  </svg>
                </RowIcon>
                <RowIcon $ml={11}><IconType size={12} color="#7a7a7a" /></RowIcon>
                <RowIcon $ml={13}>
                  <svg width="12" height="12" style={{ display: "block" }}>
                    <rect x="1.5" y="1.5" width="9" height="9" fill="none" stroke="#777" />
                    <path d="M0 0 H3 V3 H0 Z M9 0 H12 V3 H9 Z M0 9 H3 V12 H0 Z M9 9 H12 V12 H9 Z" fill="#777" />
                  </svg>
                </RowIcon>
                <RowIcon $ml={12}>
                  <svg width="12" height="12" style={{ display: "block" }}>
                    <path d="M4 0.5 H8 L11 3.5 V11.5 H7" fill="none" stroke="#777" />
                    <rect x="0" y="6" width="6" height="6" fill="#777" />
                  </svg>
                </RowIcon>
                <FilterToggle />
              </PanelRow>
              <PanelRow $h={28}>
                <LightSelect $w={111} $ml={4}>正常<Updown /></LightSelect>
                <RowLabel $ml={8} $w={52}>不透明度:</RowLabel>
                <NumberField>
                  <NumberText>100%</NumberText>
                  <NumberCaret><Caret $color="#a0a0a0" /></NumberCaret>
                </NumberField>
              </PanelRow>
              <PanelRow $h={30} $pb={1}>
                <RowLabel $ml={7} $w={28}>锁定:</RowLabel>
                <RowIcon $ml={8}>
                  <svg width="11" height="11" style={{ display: "block" }}>
                    <rect width="11" height="11" fill="#5c5c5c" />
                    <path d="M0 0 H4 V4 H0 Z M7 0 H11 V4 H7 Z M4 4 H7 V7 H4 Z M0 7 H4 V11 H0 Z M7 7 H11 V11 H7 Z" fill="#8a8a8a" />
                  </svg>
                </RowIcon>
                <RowIcon $ml={9}>
                  <svg width="16" height="14" style={{ display: "block" }}>
                    <path d="M16 0 L7 9 L9 11 Z M6 9.5 C4 10 4 13 0 13.5 C4 15 9 14 8.5 11 Z" fill="#8a8a8a" />
                  </svg>
                </RowIcon>
                <RowIcon $ml={7}>
                  <svg width="13" height="13" style={{ display: "block" }}>
                    <path d="M6.5 1 V12 M1 6.5 H12" stroke="#8a8a8a" />
                    <path d="M6.5 0 L4.5 2.5 H8.5 Z M6.5 13 L4.5 10.5 H8.5 Z M0 6.5 L2.5 4.5 V8.5 Z M13 6.5 L10.5 4.5 V8.5 Z" fill="#8a8a8a" />
                  </svg>
                </RowIcon>
                <RowIcon $ml={11}>
                  <svg width="10" height="13" style={{ display: "block" }}>
                    <path d="M2 6 V3.5 A3 3 0 0 1 8 3.5 V6" fill="none" stroke="#8a8a8a" strokeWidth="1.4" />
                    <rect x="0" y="6" width="10" height="7" fill="#8a8a8a" />
                  </svg>
                </RowIcon>
                <RowLabel $ml={26} $w={28}>填充:</RowLabel>
                <NumberField>
                  <NumberText>100%</NumberText>
                  <NumberCaret><Caret $color="#a0a0a0" /></NumberCaret>
                </NumberField>
              </PanelRow>
              <LayerList>
                <LayerMain>
                  <EyeCell>
                    <svg width="13" height="9" style={{ display: "block" }}>
                      <path d="M0 4.5 C3 -1 10 -1 13 4.5 C10 10 3 10 0 4.5 Z" fill="#b8b8b8" />
                      <circle cx="6.5" cy="4.5" r="2.2" fill="#383838" />
                    </svg>
                  </EyeCell>
                  <LayerRow>
                    <LayerThumb />
                    <LayerName>背景</LayerName>
                    <LayerLock>
                      <svg width="10" height="13" style={{ display: "block" }}>
                        <path d="M2.5 6 V3.5 A2.5 2.5 0 0 1 7.5 3.5 V6" fill="none" stroke="#d0d0d0" />
                        <rect x="0.5" y="6" width="9" height="6.5" fill="none" stroke="#d0d0d0" />
                        <rect x="4" y="8" width="2" height="2" fill="#d0d0d0" />
                      </svg>
                    </LayerLock>
                  </LayerRow>
                </LayerMain>
                <ListScroll />
              </LayerList>
              <LayerFooter>
                <FooterSlot>
                  <svg width="15" height="9" style={{ display: "block" }}>
                    <path d="M6 1 H3 A3.5 3.5 0 0 0 3 8 H6 M9 1 H12 A3.5 3.5 0 0 1 12 8 H9 M4 4.5 H11" fill="none" stroke="#6a6a6a" strokeWidth="1.3" />
                  </svg>
                </FooterSlot>
                <FooterSlot>
                  <svg width="16" height="13" style={{ display: "block" }}>
                    <text x="0" y="11" fontSize="13" fontStyle="italic" fontFamily="Liberation Serif" fill="#666">fx</text>
                  </svg>
                </FooterSlot>
                <FooterSlot>
                  <svg width="13" height="10" style={{ display: "block" }}>
                    <rect width="13" height="10" fill="#9a9a9a" />
                    <circle cx="6.5" cy="5" r="2.5" fill="#333" />
                  </svg>
                </FooterSlot>
                <FooterSlot>
                  <svg width="13" height="12" style={{ display: "block" }}>
                    <circle cx="6" cy="6" r="5.5" fill="#9a9a9a" />
                    <path d="M9 2 A5 5 0 0 1 3 10 Z" fill="#3c3c3c" />
                  </svg>
                </FooterSlot>
                <FooterSlot>
                  <svg width="13" height="10" style={{ display: "block" }}>
                    <path d="M0 0 H5 L6 2 H13 V10 H0 Z" fill="#9a9a9a" />
                  </svg>
                </FooterSlot>
                <FooterSlot>
                  <svg width="12" height="11" style={{ display: "block" }}>
                    <path d="M2 0 H12 V11 H4 V7 H0 V2 Z" fill="#9a9a9a" />
                  </svg>
                </FooterSlot>
                <FooterSlot>
                  <svg width="12" height="12" style={{ display: "block" }}>
                    <path d="M0 3 H12 M4 3 V1 H8 V3 M2 4.5 V11.5 H10 V4.5 M5 5 V10 M7 5 V10" fill="none" stroke="#6f6f6f" />
                  </svg>
                </FooterSlot>
              </LayerFooter>
            </PanelColumn>
          </DockColumns>
        </RightDock>
      </Body>
    </Workspace>
    <Flyout>
      {flyItems.map((f) => (
        <FlyItem key={f.label}>
          <Bullet $on={f.on} />
          {f.icon}
          <FlyLabel>{f.label}</FlyLabel>
          <Shortcut>T</Shortcut>
        </FlyItem>
      ))}
    </Flyout>
    <RedHighlight />
  </Screen>
);

export default App;
